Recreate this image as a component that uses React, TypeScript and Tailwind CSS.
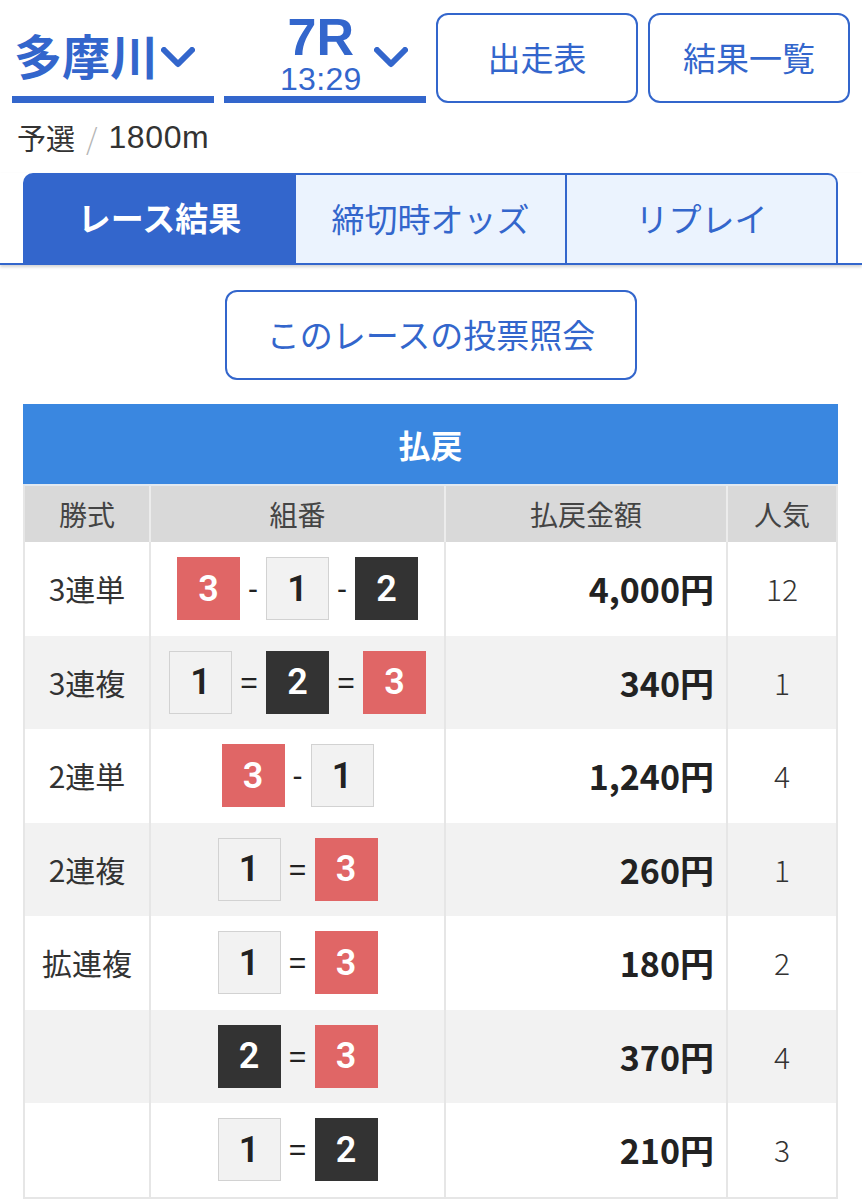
import React from 'react'

type Row = { type: string; combo: number[]; sep: string; amount: string; pop: string }

const rows: Row[] = [
  { type: '3連単', combo: [3, 1, 2], sep: '-', amount: '4,000円', pop: '12' },
  { type: '3連複', combo: [1, 2, 3], sep: '=', amount: '340円', pop: '1' },
  { type: '2連単', combo: [3, 1], sep: '-', amount: '1,240円', pop: '4' },
  { type: '2連複', combo: [1, 3], sep: '=', amount: '260円', pop: '1' },
  { type: '拡連複', combo: [1, 3], sep: '=', amount: '180円', pop: '2' },
  { type: '', combo: [2, 3], sep: '=', amount: '370円', pop: '4' },
  { type: '', combo: [1, 2], sep: '=', amount: '210円', pop: '3' },
]

const Chevron = () => (
  <svg width="34" height="22" viewBox="0 0 34 22" fill="none">
    <path d="M3 3 L17 17 L31 3" stroke="#3366cc" strokeWidth="6" strokeLinecap="round" strokeLinejoin="round" />
  </svg>
)

function Boat({ n }: { n: number }) {
  const cls =
    n === 1
      ? 'bg-[#f2f2f2] border border-[#d2d2d2] text-[#222]'
      : n === 2
        ? 'bg-[#333333] text-white'
        : 'bg-[#e06666] text-white'
  return (
    <div className={`w-[63px] h-[63px] flex items-center justify-center text-[36px] font-semibold font-['Roboto',sans-serif] ${cls}`}>
      {n}
    </div>
  )
}

export default function App() {
  return (
    <div className="w-[862px] min-h-[1200px] bg-white font-['Noto_Sans_CJK_JP',sans-serif] text-[#333]">
      {/* top selectors */}
      <div className="flex gap-[10px] px-[12px] pt-[13px]">
        <div className="w-[202px] h-[90px] border-b-[7px] border-[#3366cc] flex items-center pl-[2px] pb-[2px] gap-[3px]">
          <span className="text-[48px] font-bold text-[#3366cc] leading-none">多摩川</span>
          <span className="mt-[8px]"><Chevron /></span>
        </div>
        <div className="w-[202px] h-[90px] border-b-[7px] border-[#3366cc] flex items-start pl-[56px] gap-[12px]">
          <div className="flex flex-col items-center text-[#3366cc] font-['Liberation_Sans',sans-serif] -mt-[2px]">
            <span className="text-[52px] font-bold leading-[52px]">7R</span>
            <span className="text-[32px] leading-[32px] tracking-[0.3px]">13:29</span>
          </div>
          <span className="mt-[34px]"><Chevron /></span>
        </div>
        <button className="w-[202px] h-[90px] rounded-[12px] border-2 border-[#3366cc] text-[33px] text-[#3366cc]">
          出走表
        </button>
        <button className="w-[202px] h-[90px] rounded-[12px] border-2 border-[#3366cc] text-[33px] text-[#3366cc]">
          結果一覧
        </button>
      </div>

      <div className="mt-[16px] pl-[17px] h-[36px] flex items-center text-[29px] text-[#333] leading-none">
        <span>予選</span>
        <span className="mx-[11px] text-[#b5b5b5] font-light">/</span>
        <span className="font-['Liberation_Sans',sans-serif] text-[32px] tracking-[0.6px]">1800m</span>
      </div>

      {/* tabs */}
      <div className="mt-[18px] px-[23px] border-b-2 border-[#3366cc] shadow-[0_2px_3px_rgba(0,0,0,0.18)] flex">
        <div className="w-[273px] h-[90px] bg-[#3366cc] rounded-tl-[10px] flex items-center justify-center text-white text-[33px] font-bold">
          レース結果
        </div>
        <div className="w-[271px] h-[90px] bg-[#ebf3fe] border-t-2 border-r-2 border-[#3366cc] flex items-center justify-center text-[#3366cc] text-[33px]">
          締切時オッズ
        </div>
        <div className="w-[271px] h-[90px] bg-[#ebf3fe] border-t-2 border-r-2 border-[#3366cc] rounded-tr-[10px] flex items-center justify-center text-[#3366cc] text-[33px]">
          リプレイ
        </div>
      </div>

      <div className="flex justify-center mt-[25px]">
        <button className="w-[412px] h-[90px] rounded-[12px] border-2 border-[#3366cc] text-[33px] text-[#3366cc]">
          このレースの投票照会
        </button>
      </div>

      {/* payout table */}
      <div className="mt-[24px] mx-[23px] w-[815px]">
        <div className="h-[80px] bg-[#3a87e0] flex items-center justify-center text-white text-[32px] font-bold">
          払戻
        </div>
        <div className="border-l-2 border-r-2 border-b-2 border-[#e6e6e6] border-t-2 border-t-[#e2e9f0]">
          <div className="grid grid-cols-[126px_295px_282px_108px] h-[56px] bg-[#d9d9d9] text-[28px] text-[#444]">
            <div className="flex items-center justify-center border-r-2 border-[#ececec]">勝式</div>
            <div className="flex items-center justify-center border-r-2 border-[#ececec]">組番</div>
            <div className="flex items-center justify-center border-r-2 border-[#ececec]">払戻金額</div>
            <div className="flex items-center justify-center">人気</div>
          </div>
          {rows.map((r, i) => (
            <div
              key={i}
              className={`grid grid-cols-[126px_295px_282px_108px] h-[93.5px] ${i % 2 === 1 ? 'bg-[#f2f2f2]' : 'bg-white'}`}
            >
              <div className="flex items-center justify-center border-r-2 border-[#e6e6e6] text-[30px] text-[#333]">
                {r.type}
              </div>
              <div className="flex items-center justify-center border-r-2 border-[#e6e6e6]">
                {r.combo.map((n, j) => (
                  <React.Fragment key={j}>
                    {j > 0 && (
                      <span
                        className={`${r.sep === '-' ? 'w-[26px]' : 'w-[34px]'} text-center text-[30px] text-[#222] font-['Liberation_Sans',sans-serif]`}
                      >
                        {r.sep}
                      </span>
                    )}
                    <Boat n={n} />
                  </React.Fragment>
                ))}
              </div>
              <div className="flex items-center justify-end pr-[12px] border-r-2 border-[#e6e6e6] text-[34px] font-bold text-[#222]">
                {r.amount}
              </div>
              <div className="flex items-center justify-center text-[30px] font-light text-[#333]">{r.pop}</div>
            </div>
          ))}
        </div>
      </div>
    </div>
  )
}
